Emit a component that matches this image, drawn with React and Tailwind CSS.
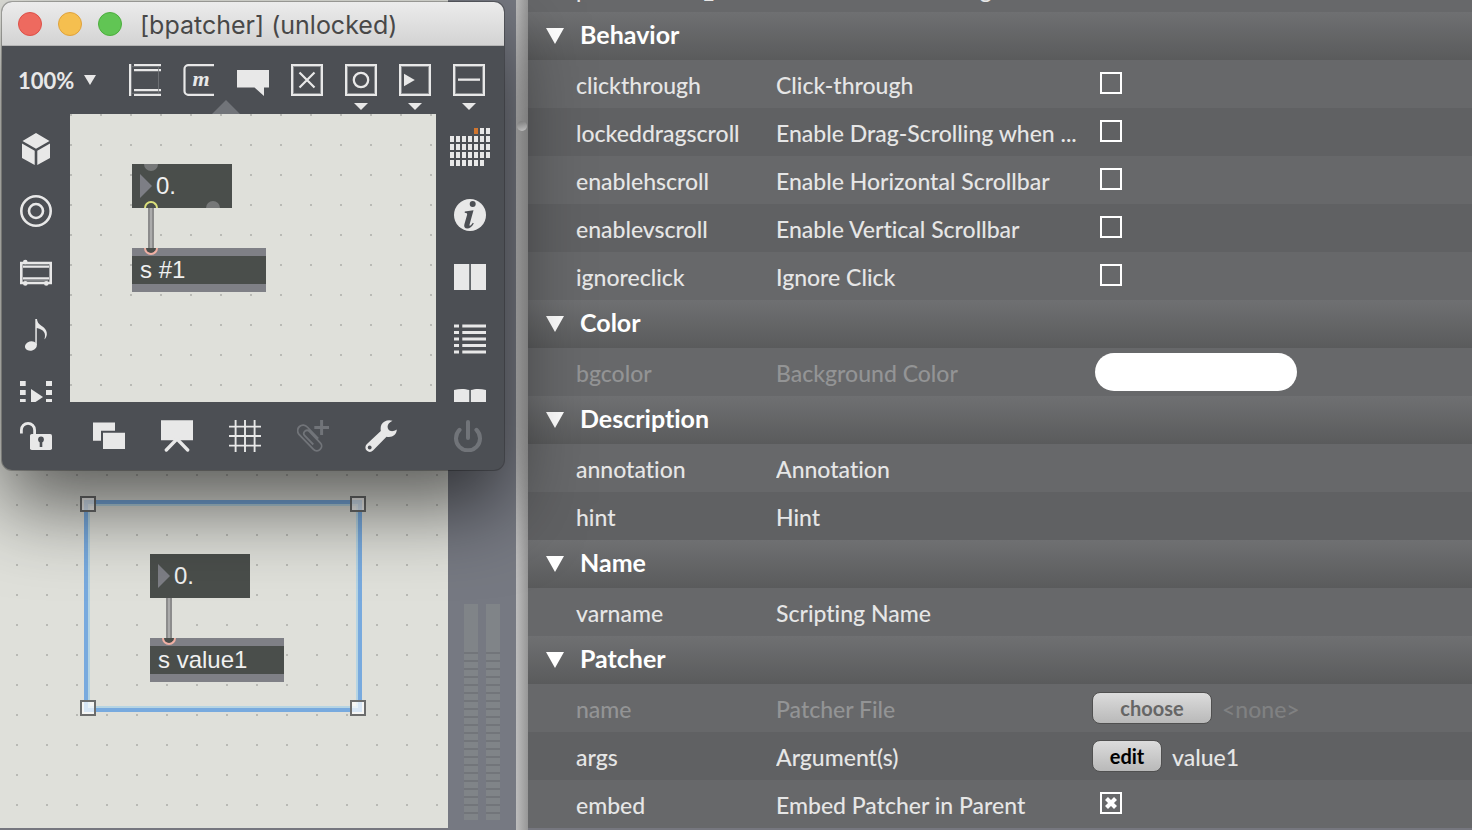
import React, { useState } from "react";

const DOTS =
  "bg-[#dfe0da] bg-[conic-gradient(from_270deg_at_2px_2px,#b9bab5_90deg,transparent_0)] bg-[size:30px_30px]";

function Icon({ children, className = "", box = "0 0 32 32", size = "size-8" }) {
  return (
    <svg viewBox={box} className={`${size} shrink-0 ${className}`} fill="currentColor" aria-hidden="true">
      {children}
    </svg>
  );
}

const Box = () => (
  <>
    <rect x="2.5" y="2.5" width="27" height="27" fill="none" stroke="#8d8f92" />
    <rect x="1" y="1" width="30" height="30" fill="none" stroke="currentColor" strokeWidth="2" />
  </>
);

const ObjectIcon = () => (
  <Icon>
    <path d="M0 0h2.3v32H0zM5 0h27v2.2H5zM5 5h27v2.2H5zM5 25h27v2.2H5zM5 29.8h27V32H5z" />
    <path d="M3 2.7h29M3 29.3h29M29.5 2v28" stroke="#75777b" strokeWidth=".8" fill="none" />
  </Icon>
);
const MessageIcon = () => (
  <Icon>
    <path d="M31 1.2H5A3.7 3.7 0 0 0 1.5 5v22A3.7 3.7 0 0 0 5 30.8h26" fill="none" stroke="currentColor" strokeWidth="2.2" />
    <text x="18" y="21.500" fontSize="22" fontWeight="bold" fontStyle="italic" fontFamily="Liberation Serif, serif" textAnchor="middle">m</text>
  </Icon>
);
const CommentIcon = () => <Icon><path d="M0 6h32v17.5h-5V32l-9.5-8.5H0z" /></Icon>;
const ToggleIcon = () => <Icon><Box /><path d="M8.5 8.5l15 15M23.5 8.5l-15 15" stroke="currentColor" strokeWidth="2.2" /></Icon>;
const ButtonIcon = () => <Icon><Box /><circle cx="16" cy="16" r="7.2" fill="none" stroke="currentColor" strokeWidth="2.3" /></Icon>;
const PlayIcon = () => <Icon><Box /><path d="M5 9.7L15.8 16 5 22.3z" /></Icon>;
const SliderIcon = () => <Icon><Box /><rect x="5" y="14.5" width="22" height="2.3" /></Icon>;

const CubeIcon = () => <Icon><path d="M16 0l13.5 8L16 15.8 2.5 8zM2 10.6l12.7 7.2V32L2 25zM17.3 17.8L30 10.6V25l-12.7 7z" /></Icon>;
const TargetIcon = () => (
  <Icon>
    <g fill="none" stroke="currentColor" strokeWidth="2.6"><circle cx="16" cy="16" r="14.7" /><circle cx="16" cy="16" r="7" /></g>
  </Icon>
);
const FrameIcon = () => (
  <Icon>
    <path d="M1.3 6h29.4v20H1.3z" fill="none" stroke="currentColor" strokeWidth="2.6" />
    <path d="M3 9.6h26M3 21.400h26" stroke="currentColor" strokeWidth="2.4" />
    <path d="M4 7.900h24M4 23.700h24" stroke="#8d8f92" strokeWidth="1" />
    <circle cx="5.3" cy="5" r="2.3" /><circle cx="5.3" cy="26.4" r="2.3" /><circle cx="26.3" cy="26.4" r="2.3" />
  </Icon>
);
const NoteIcon = () => (
  <Icon>
    <path d="M15.3 0H17c.4 4 2.6 5.600 5.500 7.500 4.600 3 6 8.500 2.300 12.700-.3 0-.4-.3-.2-.6C26 15 24.500 10.500 16.800 9v17h-1.500z" />
    <ellipse cx="10.900" cy="27" rx="6" ry="4.700" transform="rotate(-16 10.900 27)" />
  </Icon>
);
const VideoIcon = () => (
  <Icon><path d="M0 0h5.700v5H0zM0 9h5.700v5H0zM0 18h5.700v5H0zM26 0h6v5h-6zM26 9h6v5h-6zM26 18h6v5h-6zM11 8l12 8-12 8z" /></Icon>
);

const CALENDAR = [[4, 5, 6], [0, 1, 2, 3, 4, 5, 6], [0, 1, 2, 3, 4, 5, 6], [0, 1, 2, 3, 4, 5, 6], [0, 1, 2, 3, 4, 5]];
const CalendarIcon = () => (
  <Icon box="0 0 40 38" size="w-10 h-[38px]">
    {CALENDAR.flatMap((cols, r) =>
      cols.map((c) => <rect key={`${r}-${c}`} x={c * 6} y={r * 8} width="4" height="6" fill={r === 0 && c === 4 ? "#d1762f" : "currentColor"} />)
    )}
  </Icon>
);
const InfoIcon = () => (
  <Icon>
    <circle cx="16" cy="16" r="16" />
    <circle cx="18.700" cy="5" r="3" fill="#4c4f54" />
    <path d="M10.800 12.600l8.700-1.400-4 14.600c-.3 1.200.6 1.400 1.600.3l1.800-2.300.9.600c-2 3.400-4.100 5-6.500 5-2.600 0-3.600-1.600-2.900-4.200l2.700-9.500c.3-1.400-.5-1.900-2.400-2z" fill="#4c4f54" />
  </Icon>
);
const ColumnsIcon = () => <Icon><path d="M0 3h15.300v26H0zM17 3h15v26H17z" /><path d="M16.100 3v26" stroke="#75777b" /></Icon>;
const ListIcon = () => (
  <Icon><path d="M0 3h5M0 9.500h5M0 16h5M0 22.500h5M0 29h5M8.300 3H32M8.300 9.500H32M8.300 16H32M8.300 22.500H32M8.300 29H32" stroke="currentColor" strokeWidth="3.200" /></Icon>
);
const BookIcon = () => (
  <Icon><path d="M0 5c5-1.500 11-1.500 15.300 0v20H0zM17 5c4-1.500 10-1.500 15 0v20H17z" /><path d="M16.100 5v20" stroke="#75777b" /></Icon>
);

const LockIcon = () => (
  <Icon>
    <path d="M1.400 13.500V10a6.600 6.600 0 0 1 13.200 0v5" fill="none" stroke="currentColor" strokeWidth="2.800" />
    <rect x="10" y="14" width="22" height="16" rx="1.800" />
    <circle cx="21" cy="19.500" r="2.900" fill="#4c4f54" /><path d="M19.700 20h2.600v7h-2.600z" fill="#4c4f54" />
  </Icon>
);
const LayersIcon = () => <Icon><path d="M0 2.600h22v8.200H8v9.900H0zM10 12.800h22V29H10z" /></Icon>;
const EaselIcon = () => (
  <Icon><path d="M0 .3h32v20H0z" /><path d="M15.500 19.500L5.300 30M16.500 19.500L26.700 30" stroke="currentColor" strokeWidth="3.300" strokeLinecap="round" /></Icon>
);
const GridIcon = () => <Icon><path d="M6.600 0v32M16 0v32M25.600 0v32M0 6.600h32M0 16h32M0 25.600h32" stroke="currentColor" strokeWidth="1.900" /></Icon>;
const ClipIcon = () => (
  <Icon className="text-[#717479]">
    <path d="M21.300 18.500L10.300 7A5.300 5.300 0 0 0 2 14.300L16.500 29.300A4.700 4.700 0 0 0 23.300 22.800L12.300 11.300A3.200 3.200 0 0 0 7.500 15.500L16.300 24.500" fill="none" stroke="currentColor" strokeWidth="1.800" />
    <path d="M24.600 0v15M17.300 7.400H32" stroke="currentColor" strokeWidth="3" />
  </Icon>
);
const WrenchIcon = () => (
  <Icon>
    <path d="M27.500.7C23-.8 18.500 1 16.500 4.500c-1 2-1 4-.7 6.500L1.700 24.300A4.400 4.400 0 0 0 8 30.600L21.500 16.700c5.500 1.300 10-1.700 10.300-7.200-2.200 1.300-4.300 2-6 1.500-2-.6-3.300-2.300-3.200-4.500.1-2.400 2-4.300 4.900-5.800z" />
    <circle cx="4.700" cy="27.500" r="1.900" fill="#4c4f54" />
  </Icon>
);
const PowerIcon = () => (
  <Icon className="text-[#717479]">
    <g fill="none" stroke="currentColor" strokeWidth="4" strokeLinecap="round"><path d="M16 2v16" /><path d="M7.600 9.800a12 12 0 1 0 16.800 0" /></g>
  </Icon>
);

function Tool({ label, children, className = "" }) {
  return (
    <button type="button" aria-label={label} className={`flex shrink-0 items-center justify-center ${className}`}>
      {children}
    </button>
  );
}

const TOP_TOOLS = [
  ["Object", ObjectIcon],
  ["Message", MessageIcon],
  ["Comment", CommentIcon],
  ["Toggle", ToggleIcon],
  ["Button", ButtonIcon, true],
  ["Play", PlayIcon, true],
  ["Slider", SliderIcon, true],
];

const SEMI = "absolute h-[7px] w-3.5";

function Cord({ className }) {
  return <div className={`absolute w-1.5 border-x-2 border-[#8c8c8c] bg-[#ababab] ${className}`} />;
}

function NumberBox({ className, ports }) {
  return (
    <div className={`absolute flex h-11 w-[100px] items-center gap-1 bg-[#4a4e4b] pl-2 text-2xl text-[#f0f0f0] ${className}`}>
      <svg viewBox="0 0 12 24" className="h-6 w-3 fill-[#7d7e85]" aria-hidden="true"><path d="M0 0l12 12L0 24z" /></svg>
      <span>0.</span>
      {ports && (
        <>
          <i className={`${SEMI} left-3 top-0 rounded-b-full bg-[#767878]`} />
          <i className={`${SEMI} bottom-0 left-3 rounded-t-full border-2 border-b-0 border-[#dbe07b]`} />
          <i className={`${SEMI} bottom-0 left-[74px] rounded-t-full bg-[#767878]`} />
        </>
      )}
    </div>
  );
}

function SendBox({ className, children }) {
  return (
    <div className={`absolute flex h-11 w-[134px] items-center border-y-8 border-[#7f8086] bg-[#4a4e4b] pl-2 text-2xl text-[#f0f0f0] ${className}`}>
      {children}
      <i className={`${SEMI} -top-2 left-3 rounded-b-full border-2 border-t-0 border-[#f0b0a4] bg-[#4a4e4b]`} />
    </div>
  );
}

function PatcherWindow() {
  return (
    <section className="absolute left-0.5 top-0.5 z-10 flex w-[502px] flex-col overflow-hidden rounded-[10px] bg-[#4c4f54] text-[#e8e8e8] shadow-[0_0_0_1px_rgba(0,0,0,0.25),0_36px_80px_rgba(0,0,0,0.6)]">
      <header className="flex h-11 items-center border-b border-[#b5b5b5] bg-linear-to-b from-[#ececec] to-[#d3d3d3] pl-4">
        <div className="flex gap-4">
          <button type="button" aria-label="Close" className="size-6 rounded-full border border-[#dd5048] bg-[#ee6a5f]" />
          <button type="button" aria-label="Minimize" className="size-6 rounded-full border border-[#dfa23c] bg-[#f5bf4f]" />
          <button type="button" aria-label="Zoom" className="size-6 rounded-full border border-[#4cae3d] bg-[#61c554]" />
        </div>
        <h1 className="ml-[18px] whitespace-nowrap pt-1 font-['Inter',sans-serif] text-[25px] text-[#484848]">[bpatcher] (unlocked)</h1>
      </header>

      <div className="relative flex h-[68px] items-center px-4">
        <button type="button" className="flex w-[111px] items-center gap-2.5 font-['Lato',sans-serif] text-[22px] font-bold">
          100%
          <svg viewBox="0 0 12 10" className="h-2.5 w-3 fill-current" aria-hidden="true"><path d="M0 0h12L6 10z" /></svg>
        </button>
        <div className="flex gap-[22px]">
          {TOP_TOOLS.map(([label, Glyph, more]) => (
            <Tool key={label} label={label} className="relative">
              <Glyph />
              {more && (
                <svg viewBox="0 0 14 7" className="absolute left-[9px] top-[39px] h-[7px] w-3.5 fill-current" aria-hidden="true"><path d="M0 0h14L7 7z" /></svg>
              )}
            </Tool>
          ))}
        </div>
        <svg viewBox="0 0 28 14" className="absolute bottom-0 left-[210px] h-3.5 w-7 fill-[#717479]" aria-hidden="true"><path d="M0 14L14 0l14 14z" /></svg>
      </div>

      <div className="flex h-72">
        <nav className="flex w-[68px] shrink-0 flex-col items-center gap-[30px] overflow-hidden pt-[19px]">
          <Tool label="Objects"><CubeIcon /></Tool>
          <Tool label="Collections"><TargetIcon /></Tool>
          <Tool label="Patchers"><FrameIcon /></Tool>
          <Tool label="Audio"><NoteIcon /></Tool>
          <Tool label="Video"><VideoIcon /></Tool>
        </nav>
        <div className={`relative flex-1 overflow-hidden ${DOTS}`}>
          <NumberBox className="left-[62px] top-[50px]" ports />
          <Cord className="left-[78px] top-[94px] h-10" />
          <SendBox className="left-[62px] top-[134px]">s #1</SendBox>
        </div>
        <nav className="flex w-[68px] shrink-0 flex-col items-center gap-[30px] overflow-hidden pt-[14px]">
          <Tool label="Calendar" className="mb-[3px]"><CalendarIcon /></Tool>
          <Tool label="Inspector"><InfoIcon /></Tool>
          <Tool label="Split view"><ColumnsIcon /></Tool>
          <Tool label="Console"><ListIcon /></Tool>
          <Tool label="Reference"><BookIcon /></Tool>
        </nav>
      </div>

      <footer className="flex h-[68px] items-center justify-between pl-[18px] pr-5">
        <Tool label="Unlock"><LockIcon /></Tool>
        <div className="flex gap-9">
          <Tool label="Arrange"><LayersIcon /></Tool>
          <Tool label="Presentation"><EaselIcon /></Tool>
          <Tool label="Grid"><GridIcon /></Tool>
          <Tool label="Attach"><ClipIcon /></Tool>
          <Tool label="Tools"><WrenchIcon /></Tool>
        </div>
        <Tool label="Audio power" className="ml-3.5"><PowerIcon /></Tool>
      </footer>
    </section>
  );
}

const HANDLE = "absolute size-4 border-2 border-[#6c6d6d] bg-white/70";

function Meter() {
  return (
    <div className="flex w-3.5 flex-col gap-0.5 bg-[#72757a]">
      <div className="h-12 bg-[#808488]" />
      {Array.from({ length: 21 }, (_, i) => (
        <div key={i} className="h-1.5 bg-[#808488]" />
      ))}
    </div>
  );
}

function Check({ id, on }) {
  const [checked, setChecked] = useState(!!on);
  return (
    <span className="mb-0.5 ml-2 grid place-items-center">
      <input id={id} type="checkbox" checked={checked} onChange={(e) => setChecked(e.target.checked)} className="col-start-1 row-start-1 size-[22px] appearance-none border-2 border-white" />
      {checked && (
        <svg viewBox="0 0 14 14" className="pointer-events-none col-start-1 row-start-1 size-3.5" aria-hidden="true"><path d="M2.500 2.500l9 9M11.500 2.500l-9 9" stroke="white" strokeWidth="4.200" /></svg>
      )}
    </span>
  );
}

const PUSH =
  "h-8 rounded-lg border border-[#505050] bg-linear-to-b from-[#dcdcdc] to-[#b9b9b9] text-xl font-bold leading-5";

function Row({ id, label, alt, dim, children }) {
  return (
    <div className={`flex h-12 shrink-0 items-center pl-12 text-[23px] font-medium ${alt ? "bg-[#606163]" : "bg-[#67686a]"} ${dim ? "text-[#939495]" : "text-[#e6e6e6]"}`}>
      <span className="w-[200px] shrink-0 pt-[3px]">{id}</span>
      <label htmlFor={id} className="w-[316px] shrink-0 truncate pt-[3px]">{label}</label>
      <div className="flex items-center gap-2.5">{children}</div>
    </div>
  );
}

function Section({ title, children }) {
  return (
    <section className="shrink-0">
      <h2>
        <button type="button" className="flex h-12 w-full items-center gap-4 bg-linear-to-b from-[#6f7072] to-[#5a5b5c] pl-[18px] text-[25px] font-bold text-white">
          <svg viewBox="0 0 18 16" className="h-4 w-[18px] fill-white" aria-hidden="true"><path d="M0 0h18L9 16z" /></svg>
          <span className="pb-0.5">{title}</span>
        </button>
      </h2>
      {children}
    </section>
  );
}

export default function App() {
  return (
    <main className="relative flex h-screen overflow-hidden bg-[#76777f] font-['Liberation_Sans',sans-serif]">
      <div className={`relative mb-0.5 w-[448px] shrink-0 bg-[position:16px_24px] ${DOTS}`}>
        <div className="absolute left-[84px] top-[500px] h-[212px] w-[278px] border-4 border-[#78aade]">
          <div className="absolute inset-0 border-2 border-[#b5d4e3]" />
          <i className={`${HANDLE} -left-2 -top-2`} />
          <i className={`${HANDLE} -right-2 -top-2`} />
          <i className={`${HANDLE} -bottom-2 -left-2`} />
          <i className={`${HANDLE} -bottom-2 -right-2`} />
        </div>
        <NumberBox className="left-[150px] top-[554px]" />
        <Cord className="left-[166px] top-[598px] h-10" />
        <SendBox className="left-[150px] top-[638px]">s value1</SendBox>
      </div>

      <aside className="flex w-[68px] shrink-0 items-end justify-center gap-2 bg-[#767982] pb-2.5" aria-label="Levels">
        <Meter />
        <Meter />
      </aside>

      <div className="relative w-3 shrink-0 bg-linear-to-r from-[#bdbdbd] to-[#979797]">
        <i className="absolute left-px top-[121px] size-2.5 rounded-full bg-linear-to-b from-[#a0a0a0] to-[#e8e8e8]" />
      </div>

      <div className="mb-0.5 flex min-w-0 flex-1 flex-col justify-end overflow-hidden bg-[#67686a] font-['Lato',sans-serif] [font-variant-ligatures:none]">
        <Row id="presentation_rect" label="Presentation Rectangle" />
        <Section title="Behavior">
          <Row id="clickthrough" label="Click-through"><Check id="clickthrough" /></Row>
          <Row id="lockeddragscroll" label="Enable Drag-Scrolling when ..." alt><Check id="lockeddragscroll" /></Row>
          <Row id="enablehscroll" label="Enable Horizontal Scrollbar"><Check id="enablehscroll" /></Row>
          <Row id="enablevscroll" label="Enable Vertical Scrollbar" alt><Check id="enablevscroll" /></Row>
          <Row id="ignoreclick" label="Ignore Click"><Check id="ignoreclick" /></Row>
        </Section>
        <Section title="Color">
          <Row id="bgcolor" label="Background Color" dim>
            <button id="bgcolor" type="button" className="ml-[3px] h-[38px] w-[202px] rounded-full bg-white" />
          </Row>
        </Section>
        <Section title="Description">
          <Row id="annotation" label="Annotation" />
          <Row id="hint" label="Hint" alt />
        </Section>
        <Section title="Name">
          <Row id="varname" label="Scripting Name" />
        </Section>
        <Section title="Patcher">
          <Row id="name" label="Patcher File" dim>
            <button id="name" type="button" className={`${PUSH} w-[120px] text-[#666666]`}>choose</button>
            <span className="pt-[3px] text-[#808182]">&lt;none&gt;</span>
          </Row>
          <Row id="args" label="Argument(s)" alt>
            <button id="args" type="button" className={`${PUSH} w-[70px] text-black`}>edit</button>
            <span className="pt-[3px]">value1</span>
          </Row>
          <Row id="embed" label="Embed Patcher in Parent"><Check id="embed" on /></Row>
        </Section>
      </div>

      <PatcherWindow />
    </main>
  );
}
